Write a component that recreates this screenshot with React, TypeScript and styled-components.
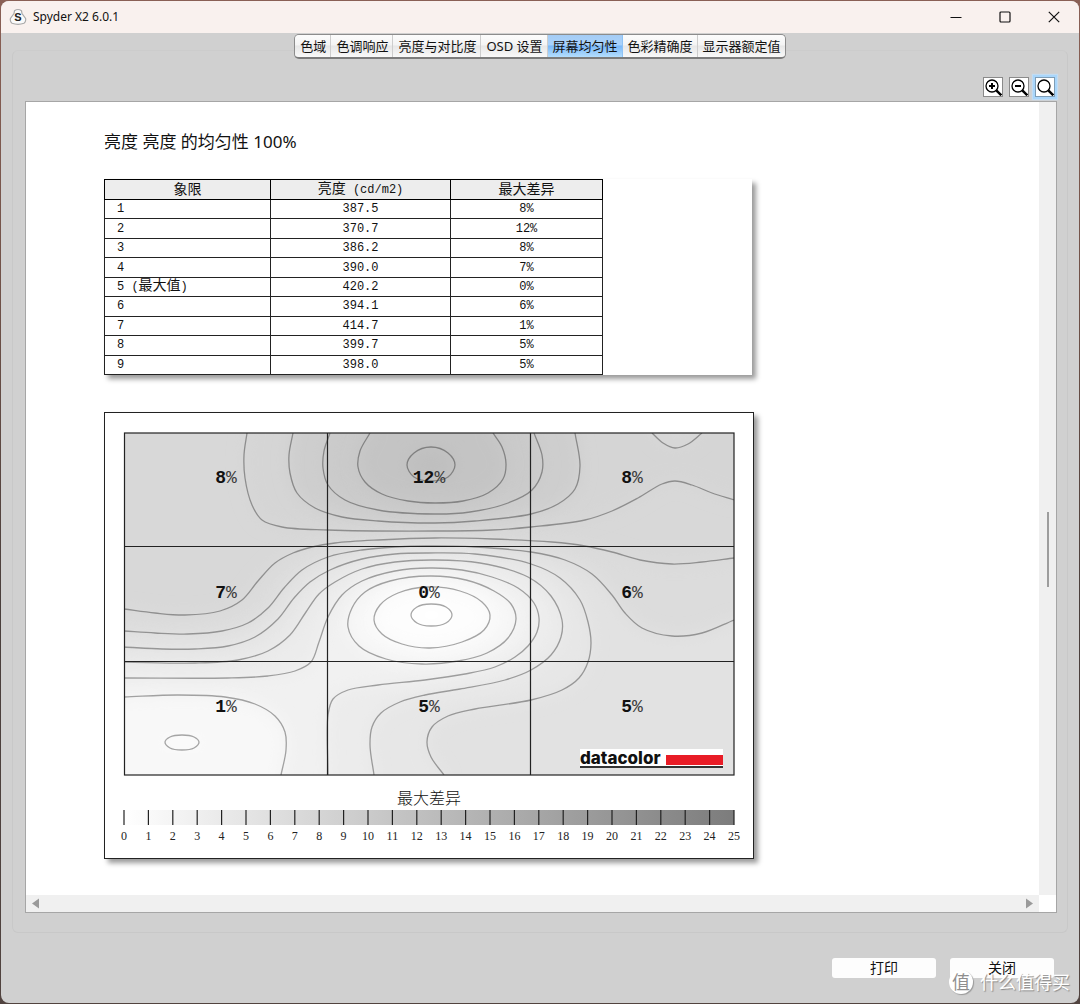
import React, { useState } from "react";
import styled, { createGlobalStyle } from "styled-components";

const UI_FONT = '"Noto Sans", "Noto Sans CJK SC", sans-serif';
const MONO_FONT = '"Liberation Mono", "Noto Sans CJK SC", monospace';

const GlobalStyle = createGlobalStyle`
  *, *::before, *::after { box-sizing: border-box; }
  body { margin: 0; font-family: ${UI_FONT}; color: #111; }
  button { font: inherit; color: inherit; margin: 0; padding: 0; border: 0; background: none; }
`;

const Desktop = styled.div`
  min-height: 100vh;
  display: flex;
  padding: 1px;
  background: linear-gradient(#8a6055, #6f5148 30%, #4a3f3c 60%, #51433f);
`;

const Window = styled.main`
  flex: 1;
  min-width: 0;
  display: flex;
  flex-direction: column;
  position: relative;
  border-radius: 8px;
  overflow: hidden;
  background: #d0d0d0;
`;

const TitleBar = styled.header`
  display: flex;
  align-items: center;
  height: 32px;
  padding: 0 1px 0 8px;
  background: #f9f1ee;
`;

const Title = styled.h1`
  flex: 1;
  margin: 0 0 0 6px;
  font-size: 12px;
  font-weight: 400;
  line-height: 20px;
`;

const WindowButton = styled.button`
  width: 49px;
  height: 32px;
  display: flex;
  align-items: center;
  justify-content: center;
`;

const Tabs = styled.nav`
  align-self: center;
  display: flex;
  position: relative;
  margin-top: 1px;
  height: 25px;
  border: 1px solid #8c8c8c;
  border-bottom: 2px solid #7c7c7c;
  border-radius: 5px;
  overflow: hidden;
`;

const Tab = styled.button<{ $active: boolean }>`
  padding: 0 4px 0 5px;
  font-size: 13px;
  line-height: 22px;
  border-right: 1px solid ${(p) => (p.$active ? "#8fc3f5" : "#cdcdcd")};
  background: ${(p) =>
    p.$active
      ? "linear-gradient(#a5ccf5, #a9d2fb 45%, #7ab8f8 50%, #b4defe)"
      : "linear-gradient(#fcfcfc, #f4f4f4 45%, #e7e7e7 50%, #f9f9f9)"};
  &:last-child { border-right: 0; }
`;

const Panel = styled.section`
  flex: 1;
  display: flex;
  flex-direction: column;
  margin: -9px 11px 0;
  padding: 26px 10px 19px 12px;
  border: 1px solid #c8c8c8;
  border-top-color: #cccccc;
  border-radius: 6px;
`;

const ToolBar = styled.div`
  display: flex;
  justify-content: flex-end;
  gap: 6px;
  padding-right: 2px;
  margin-bottom: 4px;
`;

const ToolButton = styled.button<{ $active: boolean }>`
  width: 20px;
  height: 20px;
  border: 1px solid ${(p) => (p.$active ? "#7f9db5" : "#8a8a8a")};
  background: #fff;
  box-shadow: ${(p) => (p.$active ? "0 0 0 2px #a9d6fb, 0 0 1px 3px #c2dcf2" : "none")};
  svg { display: block; }
`;

const Viewer = styled.div`
  flex: 1;
  display: grid;
  grid-template-columns: minmax(0, 1fr) 17px;
  grid-template-rows: 1fr 17px;
  border: 1px solid #a6a6a6;
  background: #fff;
`;

const Paper = styled.article`
  padding: 28px 0 36px 78px;
`;

const VerticalBar = styled.div`
  display: flex;
  flex-direction: column;
  align-items: center;
  background: #f0f0f0;
`;

const Thumb = styled.div`
  width: 2px;
  height: 75px;
  margin-top: 410px;
  background: #9d9d9d;
`;

const HorizontalBar = styled.div`
  display: flex;
  align-items: center;
  justify-content: space-between;
  padding: 0 5px;
  background: #f0f0f0;
`;

const ArrowButton = styled.button`
  width: 9px;
  height: 16px;
  svg { display: block; }
`;

const Heading = styled.h2`
  margin: 0 0 25px;
  font-size: 17px;
  font-weight: 400;
  line-height: 24px;
`;

const TableCard = styled.div`
  max-width: 648px;
  margin-bottom: 37px;
  background: #fff;
  box-shadow: 4px 4px 5px #9a9a9a;
`;

const Table = styled.table`
  width: 499px;
  height: 196px;
  table-layout: fixed;
  border-collapse: collapse;
  font-family: ${MONO_FONT};
`;

const HeadCell = styled.th<{ $width: number }>`
  width: ${(p) => p.$width}px;
  padding: 0;
  border: 1px solid #000;
  background: #ededed;
  font-size: 14px;
  font-weight: 400;
  line-height: 18px;
`;

const Cell = styled.td<{ $left?: boolean }>`
  padding: 0 0 0 ${(p) => (p.$left ? 12 : 0)}px;
  border: 1px solid #222;
  text-align: ${(p) => (p.$left ? "left" : "center")};
  font-size: 12px;
  line-height: 18px;
`;

const Latin = styled.span`
  font-size: 12px;
`;

const Han = styled.span`
  font-size: 14px;
  line-height: 14px;
`;

const ChartCard = styled.figure`
  max-width: 650px;
  margin: 0;
  padding: 20px 19px 16px;
  border: 1px solid #222;
  background: #fff;
  box-shadow: 4px 4px 5px #9a9a9a;
  svg { display: block; width: 100%; overflow: visible; }
`;

const Caption = styled.figcaption`
  margin-top: 11px;
  text-align: center;
  font-size: 16px;
  font-weight: 300;
  line-height: 24px;
`;

const Footer = styled.footer`
  display: flex;
  justify-content: flex-end;
  gap: 14px;
  padding: 25px;
`;

const PushButton = styled.button`
  width: 104px;
  height: 20px;
  border-radius: 3px;
  background: #fdfdfd;
  font-size: 14px;
  line-height: 20px;
`;

const Watermark = styled.div`
  position: absolute;
  right: 9px;
  bottom: 9px;
  display: flex;
  align-items: center;
  gap: 7px;
  color: #fff;
  font-size: 18px;
  line-height: 24px;
  text-shadow: 1px 1px 1px #888;
  pointer-events: none;
`;

const WatermarkSeal = styled.span`
  width: 24px;
  height: 24px;
  border-radius: 50%;
  background: #fff;
  color: #8f8f8f;
  text-align: center;
  text-shadow: none;
  box-shadow: 1px 1px 1px #999;
`;

type Point = [number, number];

interface Contour {
  points: Point[];
  fill: string;
  closed?: boolean;
  outer?: Point[];
}

const LOWER_HALF: Point[] = [[860, 900], [0, 900]];

const contours: Contour[] = [
  {
    fill: "#d5d5d5",
    points: [[247, 433], [244, 455], [245, 478], [252, 505], [262, 520], [282, 527], [328, 530], [435, 531], [492, 530], [531, 527], [585, 520], [612, 511], [638, 498], [662, 484], [675, 481], [692, 485], [712, 493], [734, 500]],
    outer: [[860, 500], [860, 360], [247, 360]],
  },
  {
    fill: "#cecece",
    points: [[293, 433], [289, 455], [290, 473], [297, 493], [315, 508], [342, 517], [378, 521], [435, 523], [475, 521], [531, 514], [558, 504], [575, 489], [580, 466], [575, 433]],
    outer: [[575, 360], [293, 360]],
  },
  {
    fill: "#cacaca",
    points: [[330, 433], [324, 451], [323, 468], [328, 485], [345, 500], [378, 510], [435, 514], [470, 512], [508, 503], [532, 490], [542, 472], [542, 455], [534, 433]],
    outer: [[534, 360], [330, 360]],
  },
  {
    fill: "#c4c4c4",
    points: [[370, 433], [360, 451], [358, 467], [365, 482], [382, 494], [408, 501], [435, 503], [463, 501], [488, 493], [503, 479], [506, 464], [502, 447], [493, 433]],
    outer: [[493, 360], [370, 360]],
  },
  {
    fill: "#bfbfbf",
    closed: true,
    points: [[431, 447], [448, 453], [455, 465], [448, 477], [431, 481], [414, 477], [407, 465], [414, 453]],
  },
  {
    fill: "#d8d8d8",
    points: [[652, 433], [663, 443], [675, 448], [688, 444], [702, 433]],
    outer: [[702, 380], [652, 380]],
  },
  {
    fill: "#dcdcdc",
    points: [[124, 609], [155, 613], [185, 615], [220, 611], [242, 600], [258, 581], [275, 563], [293, 553], [312, 547], [335, 543], [378, 540], [435, 538], [492, 539], [552, 542], [585, 546], [612, 552], [640, 560], [672, 564], [702, 562], [734, 558]],
    outer: [[860, 558], ...LOWER_HALF, [0, 609]],
  },
  {
    fill: "#e2e2e2",
    points: [[124, 631], [155, 633], [188, 634], [222, 631], [248, 623], [268, 608], [284, 588], [302, 570], [328, 557], [362, 550], [395, 547], [425, 546], [475, 547], [531, 552], [565, 560], [592, 574], [612, 595], [625, 613], [642, 628], [672, 636], [702, 633], [734, 620]],
    outer: [[860, 620], ...LOWER_HALF, [0, 631]],
  },
  {
    fill: "#e7e7e7",
    points: [[124, 647], [162, 649], [195, 649], [228, 646], [255, 637], [278, 619], [294, 598], [310, 582], [330, 570], [362, 559], [395, 554], [428, 553], [475, 554], [531, 564], [560, 578], [580, 600], [588, 622], [591, 643], [588, 662], [579, 678], [562, 690], [531, 700], [475, 709], [448, 716], [432, 727], [427, 742], [431, 757], [444, 775]],
    outer: [[444, 900], [0, 900], [0, 647]],
  },
  {
    fill: "#ececec",
    points: [[124, 662], [195, 663], [238, 660], [268, 651], [290, 635], [306, 612], [319, 594], [335, 582], [362, 569], [395, 562], [435, 560], [480, 563], [528, 577], [551, 596], [562, 620], [561, 637], [551, 655], [531, 670], [505, 680], [460, 689], [425, 695], [400, 702], [381, 713], [372, 727], [370, 745], [374, 775]],
    outer: [[374, 900], [0, 900], [0, 662]],
  },
  {
    fill: "#f1f1f1",
    points: [[124, 678], [228, 678], [268, 676], [295, 671], [311, 662], [319, 642], [328, 617], [342, 595], [362, 581], [395, 571], [430, 568], [462, 570], [492, 577], [518, 588], [534, 603], [539, 618], [537, 632], [528, 646], [515, 657], [495, 667], [465, 674], [425, 680], [378, 685], [348, 690], [333, 699], [328, 715], [328, 775]],
    outer: [[328, 900], [0, 900], [0, 678]],
  },
  {
    fill: "#f8f8f8",
    closed: true,
    points: [[348, 627], [352, 608], [365, 592], [390, 581], [430, 576], [466, 580], [494, 591], [511, 604], [516, 619], [508, 638], [487, 653], [458, 661], [422, 664], [386, 659], [359, 646]],
  },
  {
    fill: "#fdfdfd",
    closed: true,
    points: [[374, 620], [380, 605], [398, 593], [428, 587], [460, 591], [482, 602], [490, 615], [484, 630], [462, 642], [430, 648], [402, 644], [382, 634]],
  },
  {
    fill: "#ffffff",
    closed: true,
    points: [[411, 615], [417, 607], [431, 604], [446, 607], [452, 615], [446, 623], [431, 626], [417, 623]],
  },
  {
    fill: "#f8f8f8",
    points: [[124, 697], [178, 695], [225, 697], [255, 704], [275, 716], [285, 732], [286, 750], [281, 775]],
    outer: [[281, 900], [0, 900], [0, 697]],
  },
  {
    fill: "#fcfcfc",
    closed: true,
    points: [[165, 742], [170, 737], [182, 735], [194, 737], [199, 742], [194, 748], [182, 750], [170, 748]],
  },
];

/* Centripetal Catmull-Rom spline through the sampled contour points. */
function spline(points: Point[], closed = false): string {
  const n = points.length;
  const at = (i: number): Point =>
    closed ? points[(i + n) % n] : points[Math.max(0, Math.min(n - 1, i))];
  const step = (p: Point, q: Point) => Math.sqrt(Math.hypot(q[0] - p[0], q[1] - p[1]));
  let d = `M${points[0][0]} ${points[0][1]}`;
  for (let i = 0; i < (closed ? n : n - 1); i++) {
    const [a, b, c, e] = [at(i - 1), at(i), at(i + 1), at(i + 2)];
    const [t0, t1, t2] = [step(a, b), step(b, c), step(c, e)];
    const out = (k: 0 | 1) =>
      t0 === 0
        ? b[k] + (c[k] - b[k]) / 3
        : (t0 * t0 * c[k] - t1 * t1 * a[k] + (2 * t0 * t0 + 3 * t0 * t1 + t1 * t1) * b[k]) /
          (3 * t0 * (t0 + t1));
    const into = (k: 0 | 1) =>
      t2 === 0
        ? c[k] - (c[k] - b[k]) / 3
        : (t2 * t2 * b[k] - t1 * t1 * e[k] + (2 * t2 * t2 + 3 * t2 * t1 + t1 * t1) * c[k]) /
          (3 * t2 * (t2 + t1));
    d += `C${out(0)} ${out(1)} ${into(0)} ${into(1)} ${c[0]} ${c[1]}`;
  }
  return closed ? d + "Z" : d;
}

function area(c: Contour): string {
  const tail = (c.outer ?? []).map(([x, y]) => `L${x} ${y}`).join("");
  return spline(c.points, c.closed) + tail;
}

const zones = [
  { x: 226, y: 483, value: 8 },
  { x: 429, y: 483, value: 12 },
  { x: 632, y: 483, value: 8 },
  { x: 226, y: 598, value: 7 },
  { x: 429, y: 598, value: 0 },
  { x: 632, y: 598, value: 6 },
  { x: 226, y: 712, value: 1 },
  { x: 429, y: 712, value: 5 },
  { x: 632, y: 712, value: 5 },
];

function UniformityMap() {
  return (
    <svg viewBox="124 433 610 342" role="img" aria-label="最大差异">
      <defs>
        <clipPath id="plot"><rect x="124" y="433" width="610" height="342" /></clipPath>
        <filter id="soften" x="-20%" y="-20%" width="140%" height="140%">
          <feGaussianBlur stdDeviation="8" />
        </filter>
      </defs>
      <g clipPath="url(#plot)">
        <rect x="124" y="433" width="610" height="342" fill="#d8d8d8" />
        {contours.map((c, i) => (
          <path key={i} d={area(c)} fill={c.fill} filter="url(#soften)" />
        ))}
        {contours.map((c, i) => (
          <path key={i} d={spline(c.points, c.closed)} fill="none" stroke="#000" strokeOpacity="0.34" strokeWidth="1.3" />
        ))}
      </g>
      <g fill="none" stroke="#222" strokeWidth="1.2">
        <rect x="124.5" y="433" width="609.5" height="342" />
        <path d="M327.5 433V775M530.5 433V775M124 546.5H734M124 661.5H734" />
      </g>
      <g fontFamily='"Liberation Mono", monospace' fontSize="18" textAnchor="middle">
        {zones.map((z, i) => (
          <text key={i} x={z.x} y={z.y}>
            <tspan fontWeight="700" fill="#111">{z.value}</tspan>
            <tspan fontWeight="400" fill="#3c3c3c">%</tspan>
          </text>
        ))}
      </g>
      <rect x="580" y="749" width="143" height="18" fill="#fff" />
      <rect x="666" y="755" width="57" height="10" fill="#e81c26" />
      <rect x="580" y="766" width="143" height="2" fill="#333" />
      <text x="580" y="764" fontFamily="Inter, sans-serif" fontSize="17" fontWeight="800" fill="#111">datacolor</text>
    </svg>
  );
}

function DifferenceScale() {
  const ticks = Array.from({ length: 26 }, (_, i) => i);
  return (
    <svg viewBox="0 0 610 32" aria-hidden="true">
      <defs>
        <linearGradient id="scale">
          <stop offset="0" stopColor="#fff" />
          <stop offset="1" stopColor="#7c7c7c" />
        </linearGradient>
      </defs>
      <rect width="610" height="15" fill="url(#scale)" />
      {ticks.map((t) => (
        <g key={t}>
          <path d={`M${t * 24.4} 0V15`} stroke="#222" strokeWidth="1.2" />
          <text x={t * 24.4} y="30" textAnchor="middle" fontFamily='"Liberation Serif", serif' fontSize="12" fill="#222">{t}</text>
        </g>
      ))}
    </svg>
  );
}

function Magnifier({ sign }: { sign: string }) {
  return (
    <svg width="18" height="18" viewBox="0 0 18 18" fill="none" stroke="#000">
      <circle cx="8" cy="8" r="6" strokeWidth="1.3" />
      <path d={sign} strokeWidth="2" />
      <path d="M12.3 12.3L17.3 17.3" strokeWidth="2.4" />
    </svg>
  );
}

const tabs = ["色域", "色调响应", "亮度与对比度", "OSD 设置", "屏幕均匀性", "色彩精确度", "显示器额定值"];

const tools = [
  { label: "放大", sign: "M5 8H11M8 5V11" },
  { label: "缩小", sign: "M5 8H11" },
  { label: "适合窗口", sign: "" },
];

const rows = [
  { zone: "1", luminance: "387.5", difference: "8%" },
  { zone: "2", luminance: "370.7", difference: "12%" },
  { zone: "3", luminance: "386.2", difference: "8%" },
  { zone: "4", luminance: "390.0", difference: "7%" },
  { zone: "5", luminance: "420.2", difference: "0%", max: true },
  { zone: "6", luminance: "394.1", difference: "6%" },
  { zone: "7", luminance: "414.7", difference: "1%" },
  { zone: "8", luminance: "399.7", difference: "5%" },
  { zone: "9", luminance: "398.0", difference: "5%" },
];

export default function App() {
  const [tab, setTab] = useState(4);
  const [tool, setTool] = useState(2);

  return (
    <Desktop>
      <GlobalStyle />
      <Window>
        <TitleBar>
          <svg width="18" height="18" viewBox="0 0 18 18">
            <path d="M5.500 2.800Q9 0.200 12.500 2.800L13 5.500L16.600 10.500Q17.200 13.500 15 15.300Q9 17.400 3 15.300Q0.800 13.500 1.400 10.500L5 5.500Z" fill="#fafafa" stroke="#aaa" strokeWidth="1.2" />
            <text x="9" y="13" textAnchor="middle" fontFamily='"Liberation Sans", sans-serif' fontWeight="700" fontSize="11" fill="#222">S</text>
          </svg>
          <Title>Spyder X2 6.0.1</Title>
          <WindowButton aria-label="最小化">
            <svg width="12" height="12" viewBox="0 0 12 12" stroke="#111"><path d="M0.500 6.500H11.500" /></svg>
          </WindowButton>
          <WindowButton aria-label="最大化">
            <svg width="12" height="12" viewBox="0 0 12 12" fill="none" stroke="#111"><rect x="1" y="1" width="10" height="10" rx="1" strokeWidth="1.2" /></svg>
          </WindowButton>
          <WindowButton aria-label="关闭窗口">
            <svg width="12" height="12" viewBox="0 0 12 12" stroke="#111"><path d="M0.800 0.800L11.200 11.200M11.200 0.800L0.800 11.200" strokeWidth="1.2" /></svg>
          </WindowButton>
        </TitleBar>

        <Tabs role="tablist">
          {tabs.map((name, i) => (
            <Tab key={name} role="tab" aria-selected={tab === i} $active={tab === i} onClick={() => setTab(i)}>
              {name}
            </Tab>
          ))}
        </Tabs>

        <Panel>
          <ToolBar>
            {tools.map((t, i) => (
              <ToolButton key={t.label} aria-label={t.label} $active={tool === i} onClick={() => setTool(i)}>
                <Magnifier sign={t.sign} />
              </ToolButton>
            ))}
          </ToolBar>

          <Viewer>
            <Paper>
              <Heading>亮度 亮度 的均匀性 100%</Heading>
              <TableCard>
                <Table>
                  <thead>
                    <tr>
                      <HeadCell scope="col" $width={166}>象限</HeadCell>
                      <HeadCell scope="col" $width={180}>亮度<Latin> (cd/m2)</Latin></HeadCell>
                      <HeadCell scope="col" $width={152}>最大差异</HeadCell>
                    </tr>
                  </thead>
                  <tbody>
                    {rows.map((r) => (
                      <tr key={r.zone}>
                        <Cell $left>{r.zone}{r.max && <> (<Han>最大值</Han>)</>}</Cell>
                        <Cell>{r.luminance}</Cell>
                        <Cell>{r.difference}</Cell>
                      </tr>
                    ))}
                  </tbody>
                </Table>
              </TableCard>
              <ChartCard>
                <UniformityMap />
                <Caption>最大差异</Caption>
                <DifferenceScale />
              </ChartCard>
            </Paper>
            <VerticalBar><Thumb /></VerticalBar>
            <HorizontalBar>
              <ArrowButton aria-label="向左滚动">
                <svg width="9" height="16" viewBox="0 0 9 16"><path d="M8 2.500V12.500L1 7.500Z" fill="#9a9a9a" /></svg>
              </ArrowButton>
              <ArrowButton aria-label="向右滚动">
                <svg width="9" height="16" viewBox="0 0 9 16"><path d="M1 2.500V12.500L8 7.500Z" fill="#9a9a9a" /></svg>
              </ArrowButton>
            </HorizontalBar>
          </Viewer>
        </Panel>

        <Footer>
          <PushButton>打印</PushButton>
          <PushButton>关闭</PushButton>
        </Footer>

        <Watermark>
          <WatermarkSeal>值</WatermarkSeal>
          什么值得买
        </Watermark>
      </Window>
    </Desktop>
  );
}
